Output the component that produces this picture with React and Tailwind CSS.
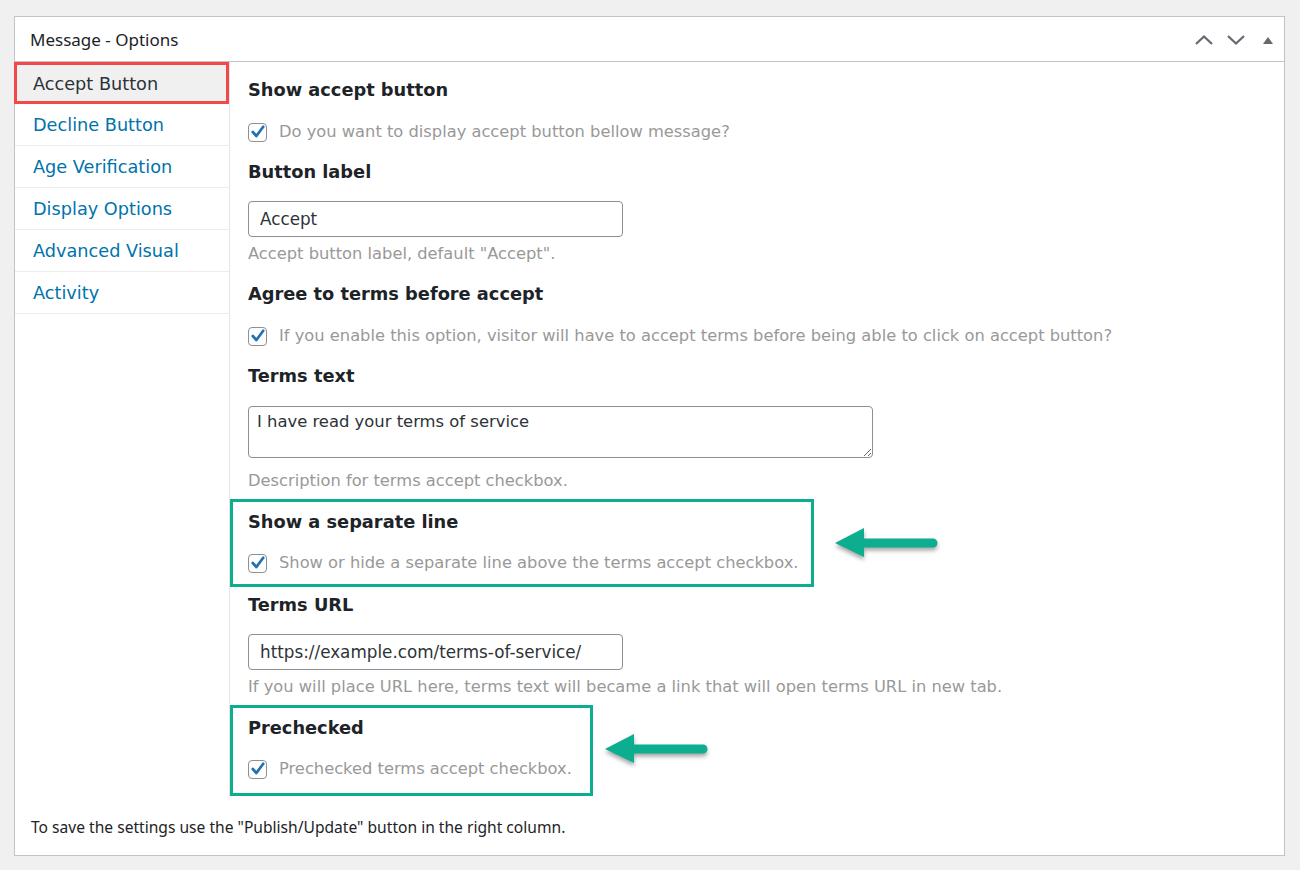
import { useState } from 'react'

const tabs = ['Accept Button', 'Decline Button', 'Age Verification', 'Display Options', 'Advanced Visual', 'Activity']

function Check({ label }) {
  return (
    <label className="flex items-center h-6 gap-[12px] text-[16.3px] text-[#999999] leading-6">
      <span className="w-[19px] h-[19px] shrink-0 rounded-[4px] border border-[#8c8f94] bg-white flex items-center justify-center">
        <svg width="16" height="16" viewBox="0 0 20 20">
          <path d="M3.5 10 L8 15 L16.5 3.5" fill="none" stroke="#2271b1" strokeWidth="3.4" strokeLinecap="round" strokeLinejoin="round" />
        </svg>
      </span>
      {label}
    </label>
  )
}

function Heading({ children }) {
  return <h3 className="text-[17.8px] font-bold leading-6 text-[#1d2327]">{children}</h3>
}

function Arrow({ className }) {
  return (
    <svg width="112" height="42" viewBox="0 0 112 42" className={className} style={{ filter: 'drop-shadow(0 3px 2px rgba(0,0,0,0.35))' }}>
      <path d="M4 18 L33 3 L33 13.5 L102 13.5 A4.5 4.5 0 0 1 102 22.5 L33 22.5 L33 32 Z" fill="#0cae8f" />
    </svg>
  )
}

export default function App() {
  const [active] = useState(0)

  return (
    <div className="min-h-screen bg-[#f0f0f1] pt-4 pl-[14px] pr-[15px] pb-[15px]" style={{ fontFamily: '"DejaVu Sans", Verdana, sans-serif' }}>
      <div className="bg-white border border-[#c3c4c7]">
        {/* Header */}
        <div className="h-[45px] border-b border-[#c3c4c7] flex items-center justify-between pl-[15px] pt-[2px]">
          <h2 className="text-[17px] text-[#1d2327]" style={{ fontFamily: '"Noto Sans", "Open Sans", sans-serif' }}>Message - Options</h2>
          <div className="flex items-center">
            <button className="w-8 h-8 flex items-center justify-center">
              <svg width="18" height="10" viewBox="0 0 18 10"><polyline points="1,9 9,1.5 17,9" fill="none" stroke="#646970" strokeWidth="2.2" /></svg>
            </button>
            <button className="w-8 h-8 flex items-center justify-center">
              <svg width="18" height="10" viewBox="0 0 18 10"><polyline points="1,1 9,8.5 17,1" fill="none" stroke="#646970" strokeWidth="2.2" /></svg>
            </button>
            <button className="w-8 h-8 flex items-center justify-center">
              <svg width="10" height="7" viewBox="0 0 10 7"><polygon points="0,7 5,0 10,7" fill="#646970" /></svg>
            </button>
          </div>
        </div>

        {/* Columns */}
        <div className="flex">
          <ul className="w-[215px] shrink-0 border-r border-[#e5e5e5]">
            {tabs.map((t, i) => (
              <li
                key={t}
                className={
                  i === active
                    ? 'h-[42px] -ml-px flex items-center pl-[16px] pt-[2px] text-[17.7px] text-[#2c3338] bg-[#f0f0f1] border-[3px] border-[#f44848]'
                    : 'h-[42px] flex items-center pl-[18px] pt-[2px] text-[17.7px] text-[#0073aa] border-b border-[#ececec]'
                }
              >
                {t}
              </li>
            ))}
          </ul>

          <div className="flex-1 pl-[18px] pt-4 pb-px">
            <Heading>Show accept button</Heading>
            <div className="mt-[18px]"><Check label="Do you want to display accept button bellow message?" /></div>

            <div className="mt-4"><Heading>Button label</Heading></div>
            <input
              defaultValue="Accept"
              className="mt-[17px] block w-[375px] h-9 px-[11px] rounded-[4px] border border-[#8c8f94] text-[16.8px] text-[#2c3338]"
            />
            <p className="mt-[5px] text-[16.3px] leading-6 text-[#999999]">Accept button label, default "Accept".</p>

            <div className="mt-4"><Heading>Agree to terms before accept</Heading></div>
            <div className="mt-[18px]"><Check label="If you enable this option, visitor will have to accept terms before being able to click on accept button?" /></div>

            <div className="mt-4"><Heading>Terms text</Heading></div>
            <textarea
              defaultValue="I have read your terms of service"
              className="mt-[18px] block w-[625px] h-[52px] px-[8px] pt-[3px] rounded-[4px] border border-[#8c8f94] text-[16.4px] leading-6 text-[#2c3338]"
            />
            <p className="mt-[11px] text-[16.3px] leading-6 text-[#999999]">Description for terms accept checkbox.</p>

            <div className="relative mt-[6px] -ml-[18px] w-[584px] border-[3px] border-[#0cae8f] pl-[15px] pt-2 pb-[9px]">
              <Heading>Show a separate line</Heading>
              <div className="mt-[17px]"><Check label="Show or hide a separate line above the terms accept checkbox." /></div>
              <Arrow className="absolute left-[598px] top-[23px]" />
            </div>

            <div className="mt-[6px]"><Heading>Terms URL</Heading></div>
            <input
              defaultValue="https://example.com/terms-of-service/"
              className="mt-[17px] block w-[375px] h-9 px-[11px] rounded-[4px] border border-[#8c8f94] text-[16.8px] text-[#2c3338]"
            />
            <p className="mt-[5px] text-[16.3px] leading-6 text-[#999999]">If you will place URL here, terms text will became a link that will open terms URL in new tab.</p>

            <div className="relative mt-[6px] -ml-[18px] w-[363px] border-[3px] border-[#0cae8f] pl-[15px] pt-2 pb-3">
              <Heading>Prechecked</Heading>
              <div className="mt-[17px]"><Check label="Prechecked terms accept checkbox." /></div>
              <Arrow className="absolute left-[368px] top-[23px]" />
            </div>
          </div>
        </div>

        {/* Footer */}
        <div className="pt-5 pb-[18px] pl-4">
          <p className="text-[15.6px] leading-5 text-[#1d2327]" style={{ fontFamily: '"Noto Sans", "Open Sans", sans-serif' }}>
            To save the settings use the "Publish/Update" button in the right column.
          </p>
        </div>
      </div>
    </div>
  )
}
